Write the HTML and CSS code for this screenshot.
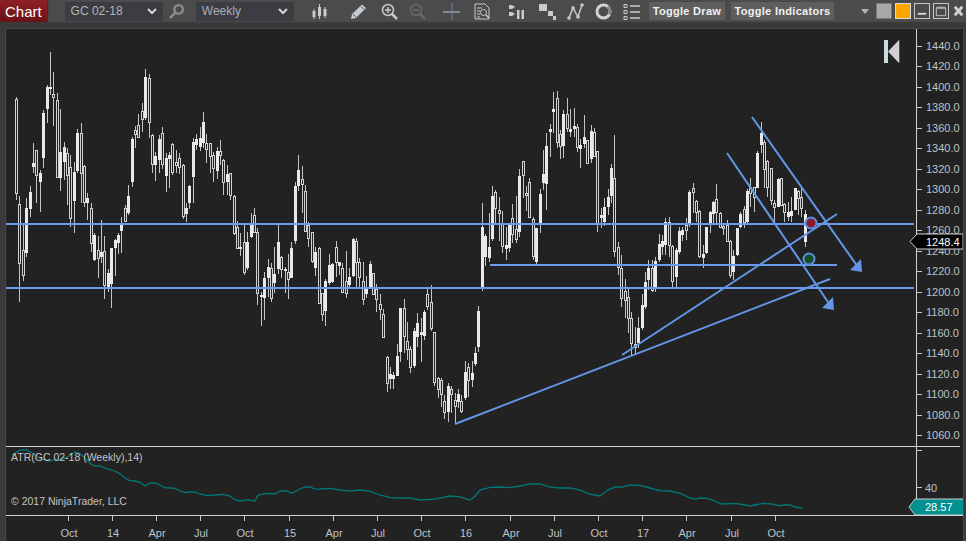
FILE: index.html
```html
<!DOCTYPE html>
<html lang="en">
<head>
<meta charset="utf-8">
<title>Chart</title>
<link rel="stylesheet" href="styles.css">
</head>
<body>
<div class="window">
  <header class="toolbar">
    <div class="tab">Chart</div>
    <div class="select select-instrument"><span>GC 02-18</span>
      <svg class="chev" viewBox="0 0 10 7"><path d="M1 1l4 4 4-4"/></svg></div>
    <svg class="icon icon-search" viewBox="0 0 16 16"><circle cx="10" cy="6" r="4"/><path d="M7 9l-5 5"/></svg>
    <div class="select select-period"><span>Weekly</span>
      <svg class="chev" viewBox="0 0 10 7"><path d="M1 1l4 4 4-4"/></svg></div>
    <svg class="icon icon-bars" viewBox="0 0 16 17"><path class="thin" d="M2.500 6v10M8 1v15M13.500 4v11"/><path d="M2.500 8v6M8 4v9M13.500 6v7"/></svg>
    <div class="tools">
      <svg class="icon tool w31" viewBox="0 0 17 17"><path class="fill" d="M1 16l1-5L12 1.500l4 3.500L6 15z"/><path class="cut" d="M3 11l3 3M11 3.500l3 3"/></svg>
      <svg class="icon tool w28" viewBox="0 0 17 17"><circle cx="7" cy="7" r="5.500"/><path d="M7 4v6M4 7h6"/><path class="heavy" d="M11 11l5 5"/></svg>
      <svg class="icon tool w34 dim" viewBox="0 0 17 17"><circle cx="7" cy="7" r="5.500"/><path d="M4 7h6"/><path class="heavy" d="M11 11l5 5"/></svg>
      <svg class="icon tool w31" viewBox="0 0 17 17"><path class="thin" d="M0 9h17"/><path class="blue" d="M9 0v18"/></svg>
      <svg class="icon tool w34" viewBox="0 0 17 17"><path class="thin" d="M1 1h10l4 4v11H1zM3 5h5M3 8h3M3 11h3M3 14h3"/><circle class="thin" cx="9.500" cy="9.500" r="3"/><path d="M12 12l3 3"/></svg>
      <svg class="icon tool w31" viewBox="0 0 17 17"><path class="fill" d="M1 2h3l3 2-3 2H1zM1 9h3l3 2-3 2H1zM9 7h2.500v9H9zM13.500 7H16v9h-2.500z"/></svg>
      <svg class="icon tool w28" viewBox="0 0 17 17"><path class="fill" d="M0 1h8v7H0zM9 8h5v5H9zM14 13h3v4h-3z"/></svg>
      <svg class="icon tool w28" viewBox="0 0 17 17"><path d="M2 15L6 5l5 9 4-12"/><circle class="fill" cx="2" cy="15" r="1.800"/><circle class="fill" cx="6" cy="5" r="1.800"/><circle class="fill" cx="11" cy="14" r="1.800"/><circle class="fill" cx="15" cy="2" r="1.800"/></svg>
      <svg class="icon tool w28" viewBox="0 0 17 17"><circle class="ring" cx="8.500" cy="8.500" r="6.500"/><path class="ring-light" d="M12.500 3.500a6.500 6.500 0 0 1 1.800 8"/></svg>
      <svg class="icon tool w25" viewBox="0 0 17 17"><path class="thin" d="M1 1.500h3v3H1zM1 7.500h3v3H1zM1 13.500h3v3H1z"/><path d="M7 3h10M7 9h10M7 15h10"/></svg>
    </div>
    <button class="toggle toggle-draw" type="button">Toggle Draw</button>
    <button class="toggle toggle-ind" type="button">Toggle Indicators</button>
    <span class="caret"></span>
    <div class="win win-gray"></div>
    <div class="win win-orange"></div>
    <div class="win win-line"><svg viewBox="0 0 15 15"><path class="win-glyph" d="M3 10.500h9"/></svg></div>
    <div class="win win-line"><svg viewBox="0 0 15 15"><path class="win-glyph-thin" d="M2.500 4.500h10v8h-10zM2.500 3.500h10"/></svg></div>
    <div class="win win-close"><svg viewBox="0 0 15 15"><path class="win-glyph-x" d="M3 3l8 9M11 3l-8 9"/></svg></div>
  </header>
  <main class="panel">
    <svg id="chart" class="chart" width="957" height="512" viewBox="6 29 957 512">
      <g id="candles"></g>
      <g class="levels">
        <path d="M6 224h908M6 288h908"/>
        <path d="M490 265h347"/>
      </g>
      <g class="trends">
        <path d="M752 117L858 267"/>
        <path d="M727 153L830 305"/>
        <path d="M622 355L837 214"/>
        <path d="M455 424L830 279"/>
      </g>
      <g class="arrowheads">
        <path d="M862 272l-12-2 11-11z"/>
        <path d="M834 310l-12-2 11-11z"/>
      </g>
      <circle class="dot dot-red" cx="811" cy="223" r="5.500"/>
      <circle class="dot dot-green" cx="809" cy="259" r="5.500"/>
      <path class="logo-bar" d="M884 40h4v23h-4z"/>
      <path class="logo-tri" d="M899 40v23l-11-11.500z"/>
      <path class="logo-red" d="M899.500 40v23"/>
      <g class="frame">
        <path d="M6 446h954M6 515h957M916 29v486"/>
      </g>
      <g id="priceAxis" class="axis-labels"></g>
      <g id="timeAxis" class="axis-labels"></g>
      <polyline id="atr" class="atr"/>
      <text class="note" x="11" y="461">ATR(GC 02-18 (Weekly),14)</text>
      <text class="note" x="11" y="505">© 2017 NinjaTrader, LLC</text>
      <path class="flag flag-price" d="M910 241.500l7-7.500h46v15h-46z"/>
      <text class="flag-text" x="926" y="246">1248.4</text>
      <path class="flag flag-atr" d="M909 507l6-8h49v16h-49z"/>
      <text class="flag-text" x="925" y="511">28.57</text>
    </svg>
  </main>
</div>
<script src="chart.js"></script>
</body>
</html>
```

FILE: styles.css
```css
* { box-sizing: border-box; }
html, body { margin: 0; padding: 0; }
body {
  width: 966px;
  height: 541px;
  overflow: hidden;
  background: #3a3a3a;
  font-family: "Liberation Sans", Arial, sans-serif;
}
.window { display: flex; flex-direction: column; height: 541px; }

.toolbar {
  display: flex;
  align-items: center;
  height: 22px;
  flex: none;
  background: #4b4b4b;
}
.tab {
  width: 47px;
  height: 22px;
  padding: 3px 0 0 5px;
  color: #fff;
  font-size: 15px;
  line-height: 17px;
  background: linear-gradient(#8e2027, #6a1217);
  box-shadow: 1px 1px 1px #333;
}
.select {
  display: flex;
  align-items: center;
  justify-content: space-between;
  width: 99px;
  height: 19px;
  padding: 0 6px;
  background: #3c3d43;
  color: #b4b4b4;
  font-size: 12px;
}
.select-instrument { margin-left: 18px; }
.select-period { margin-left: 11px; color: #a9aeb4; }
.chev { width: 10px; height: 7px; fill: none; stroke: #d5d5d5; stroke-width: 2; }

.icon {
  flex: none;
  width: 17px;
  height: 17px;
  fill: none;
  stroke: #c6cbcf;
  stroke-width: 1.500;
}
.icon .thin { stroke-width: 1; }
.icon .heavy { stroke-width: 2.500; }
.icon .fill { fill: #c6cbcf; stroke: none; }
.icon .cut { stroke: #4b4b4b; stroke-width: 1; }
.icon .blue { stroke: #5f86b8; stroke-width: 1; }
.icon .ring { stroke: #d0d4d8; stroke-width: 3; }
.icon .ring-light { stroke: #7f868c; stroke-width: 3; }
.icon.dim { stroke: #6c6f70; opacity: .9; }
.icon-search { margin-left: 5px; stroke: #8e8e8e; stroke-width: 2.200; }
.icon-bars { margin-left: 17px; stroke-width: 3; }

.tools { display: flex; margin-left: 22px; }
.w25 { margin-right: 8px; }
.w28 { margin-right: 11px; }
.w31 { margin-right: 14px; }
.w34 { margin-right: 17px; }

.toggle {
  flex: none;
  height: 18px;
  padding: 0;
  border: 0;
  background: #5e5e5e;
  color: #f1f1f1;
  font: bold 11px/18px "Liberation Sans", Arial, sans-serif;
  letter-spacing: .3px;
}
.toggle-draw { width: 76px; margin-left: 1px; }
.toggle-ind { width: 103px; margin-left: 6px; }
.caret {
  flex: none;
  width: 0;
  height: 0;
  margin-left: 27px;
  border-left: 4.500px solid transparent;
  border-right: 4.500px solid transparent;
  border-top: 5px solid #b4b4b4;
}
.win { flex: none; width: 16px; height: 16px; margin-left: 3px; }
.win svg { display: block; width: 100%; height: 100%; }
.win-gray { margin-left: 7px; background: #aaa9a9; border: 1px solid #7a7a7a; }
.win-orange { background: #ffa500; border: 1px solid #d8d8d8; }
.win-line { border: 1px solid #c8c8c8; }
.win-close { width: 14px; }
.win-glyph { fill: none; stroke: #d8d8d8; stroke-width: 2; }
.win-glyph-thin { fill: none; stroke: #c8c8c8; stroke-width: 1; }
.win-glyph-x { fill: none; stroke: #d0d0d0; stroke-width: 3; }

.panel {
  flex: 1;
  padding: 7px 3px 0 6px;
  background: #3a3a3a;
}
.chart { display: block; background: #222222; box-shadow: 0 0 0 1px #484848; }

.wick { stroke: #c4c4c4; stroke-width: 1; shape-rendering: crispEdges; }
.body-solid { fill: #e9e9e9; stroke: none; shape-rendering: crispEdges; }
.body-hollow { fill: #222222; stroke: #d2d2d2; stroke-width: 1; shape-rendering: crispEdges; }

.levels path { fill: none; stroke: #6a9bf0; stroke-width: 2; shape-rendering: crispEdges; }
.trends path { fill: none; stroke: #6496e8; stroke-width: 2; }
.arrowheads path { fill: #6496e8; stroke: none; }
.dot { stroke: #5e8fdc; stroke-width: 2; }
.dot-red { fill: #8a1c30; }
.dot-green { fill: #13501f; }
.logo-bar { fill: #c9dde0; }
.logo-tri { fill: #d2d2d2; }
.logo-red { stroke: #8d3a3a; stroke-width: 1; }

.frame path { fill: none; stroke: #d2d2d2; stroke-width: 1; shape-rendering: crispEdges; }
.tick { stroke: #c8c8c8; stroke-width: 1; shape-rendering: crispEdges; }
.axis-labels text {
  fill: #bcc2c8;
  font-size: 11px;
  font-family: "Liberation Sans", Arial, sans-serif;
}
.time-label { text-anchor: middle; }
.atr { fill: none; stroke: #007878; stroke-width: 1.300; }
.note {
  fill: #c4c4c4;
  font-size: 10.500px;
  font-family: "Liberation Sans", Arial, sans-serif;
}
.flag { stroke: #cfcfcf; stroke-width: 1; }
.flag-price { fill: #000; }
.flag-atr { fill: #009090; }
.flag-text {
  fill: #fff;
  font-size: 11px;
  font-family: "Liberation Sans", Arial, sans-serif;
}
```

FILE: chart.js
```js
// Each candle: high, body top, body bottom, low, kind (1 solid, 0 hollow), in chart pixels.
var CANDLES = "97,99,193,200,0;196,204,263,302,0;223,250,275,281,0;198,208,253,257,1;186,192,209,217,1;143,163,167,173,1;150,150,175,203,0;170,173,182,212,1;110,113,158,168,1;85,87,109,123,1;52,87,89,95,1;72,94,97,126,0;93,100,177,178,0;109,152,178,191,1;142,147,162,180,1;148,153,175,205,0;155,167,218,227,0;162,172,201,233,1;129,133,171,173,1;123,133,173,203,0;165,166,202,207,0;193,198,203,220,1;203,208,243,252,0;233,235,260,261,1;236,250,258,278,0;220,252,257,263,1;236,251,285,299,0;269,273,287,292,1;248,248,284,308,1;239,240,248,276,1;233,235,243,254,1;217,223,231,253,1;205,208,221,222,0;185,196,213,215,1;137,139,182,187,1;126,130,134,148,0;114,125,137,138,0;103,111,119,132,0;69,77,118,120,1;74,78,122,138,0;134,135,164,173,0;152,156,165,181,1;135,139,160,173,1;127,133,164,169,0;153,158,176,192,1;152,155,159,188,1;143,144,172,175,0;150,162,165,173,0;153,158,167,174,0;164,165,216,219,0;203,208,214,222,1;185,186,203,209,1;138,142,177,203,1;134,139,145,150,1;127,138,147,151,1;112,122,143,148,1;134,143,149,163,0;143,143,156,173,0;152,155,168,182,0;147,151,171,179,1;140,151,155,165,0;159,160,182,195,0;165,174,182,195,1;173,173,195,200,0;195,196,233,235,0;221,227,248,249,0;233,247,249,256,1;225,242,272,275,0;232,242,268,270,1;213,224,237,238,1;208,215,232,233,0;228,232,293,305,0;292,295,297,326,1;272,278,298,320,1;259,267,278,297,1;263,268,298,302,0;247,274,283,293,1;225,242,269,274,1;256,257,269,278,0;267,269,270,293,1;254,272,279,299,0;242,248,278,278,1;182,186,241,244,1;155,170,186,191,1;166,179,184,213,0;185,191,231,232,0;222,225,238,247,0;232,232,261,263,0;247,252,268,276,1;247,248,303,304,0;293,293,314,321,0;279,281,311,326,1;254,265,283,285,1;263,264,282,283,1;241,247,262,277,0;262,262,266,275,1;263,268,292,293,0;251,281,293,298,0;268,277,285,287,1;238,239,276,277,1;238,241,262,288,0;258,262,277,287,0;262,281,299,305,0;276,287,294,298,1;261,264,287,288,1;273,273,294,295,0;284,289,299,312,0;294,304,309,320,0;309,314,337,338,0;356,357,383,392,0;367,374,379,389,1;372,375,379,389,1;344,356,376,376,1;308,308,352,362,1;299,308,336,353,0;322,341,349,360,0;346,349,367,373,0;328,331,366,368,1;313,323,337,347,1;318,332,335,362,1;310,312,336,340,1;288,294,306,310,0;285,302,328,331,0;332,332,382,386,0;377,378,389,398,0;378,380,394,407,0;395,401,412,419,0;383,386,412,422,1;386,389,394,413,0;393,400,406,424,0;389,394,402,408,1;395,401,411,413,0;361,372,398,400,1;363,367,380,397,0;361,373,380,387,1;347,353,364,366,1;306,311,347,352,1;203,227,287,291,1;234,236,257,266,1;213,247,258,262,1;186,196,239,241,1;190,192,208,223,0;197,210,213,241,0;211,223,246,253,0;227,245,249,260,1;224,224,248,252,1;204,218,234,243,0;196,229,239,243,0;169,176,232,237,1;161,161,175,198,0;186,193,195,211,0;178,182,217,217,0;217,219,256,260,0;228,228,262,264,1;189,194,223,233,1;150,174,183,190,1;133,146,184,210,1;124,129,132,157,1;92,109,112,133,1;91,98,142,148,0;130,134,146,159,0;110,114,146,158,1;98,114,128,132,0;109,129,132,137,1;108,126,129,137,1;124,127,147,152,0;139,145,149,168,1;115,137,144,148,1;140,140,163,164,0;125,131,159,163,1;128,132,156,157,0;151,151,223,232,0;208,215,218,228,1;198,207,222,226,1;189,197,207,215,1;164,168,196,203,1;135,178,251,257,0;242,247,267,275,0;255,268,298,307,0;279,291,300,318,0;288,297,318,333,0;312,318,343,355,0;327,344,347,355,0;317,328,343,348,1;294,305,328,330,1;272,282,307,309,1;260,268,280,290,1;260,268,290,292,0;257,261,287,292,1;234,244,260,262,1;235,241,247,255,1;218,222,245,255,1;217,222,245,257,0;245,246,281,287,0;248,250,277,287,1;227,231,252,254,1;227,230,235,241,1;218,225,230,240,0;190,192,223,227,1;183,188,192,213,0;200,201,212,222,0;210,211,256,258,0;245,254,258,268,1;227,227,253,254,1;211,212,223,233,1;201,202,214,223,1;184,199,212,223,0;212,213,227,228,0;223,226,228,235,0;220,225,241,241,0;240,241,275,278,0;250,256,272,280,1;228,228,255,256,1;212,214,227,228,1;206,209,222,228,0;189,191,222,223,1;178,187,193,207,0;187,187,197,212,0;151,153,188,188,1;122,133,145,153,1;140,142,169,188,0;160,161,187,197,0;168,168,200,205,0;200,203,207,222,0;178,179,207,207,1;178,178,205,206,0;203,204,212,222,0;202,212,217,221,1;197,211,216,222,1;188,188,210,210,1;190,191,198,215,0;188,197,208,217,0;210,214,242,247,1";
var SVG_NS = "http://www.w3.org/2000/svg";

function el(parent, name, attrs, text) {
  var node = document.createElementNS(SVG_NS, name);
  for (var key in attrs) node.setAttribute(key, attrs[key]);
  if (text) node.textContent = text;
  parent.appendChild(node);
  return node;
}

var candles = document.getElementById("candles");
CANDLES.split(";").forEach(function (row, i) {
  var c = row.split(",").map(Number);
  var x = Math.round(16 + 3.4 * i);
  el(candles, "line", { "class": "wick", x1: x + 0.5, x2: x + 0.5, y1: c[0], y2: c[3] });
  if (c[4]) {
    el(candles, "rect", { "class": "body-solid", x: x - 1, y: c[1], width: 3, height: Math.max(c[2] - c[1], 2) });
  } else {
    el(candles, "rect", { "class": "body-hollow", x: x - 0.5, y: c[1] + 0.5, width: 2, height: Math.max(c[2] - c[1], 2) });
  }
});

var price = document.getElementById("priceAxis");
for (var p = 1440; p >= 1060; p -= 20) {
  var y = Math.round(46 + (1440 - p) * 1.0237);
  el(price, "line", { "class": "tick", x1: 916, x2: 922, y1: y + 0.5, y2: y + 0.5 });
  el(price, "text", { x: 926, y: y + 4 }, p.toFixed(1));
}
el(price, "line", { "class": "tick", x1: 916, x2: 922, y1: 450.5, y2: 450.5 });
el(price, "line", { "class": "tick", x1: 916, x2: 922, y1: 487.5, y2: 487.5 });
el(price, "text", { x: 925, y: 492 }, "40");

var times = ["Oct","14","Apr","Jul","Oct","15","Apr","Jul","Oct","16","Apr","Jul","Oct","17","Apr","Jul","Oct"];
var axis = document.getElementById("timeAxis");
times.forEach(function (label, i) {
  var x = Math.round(67.6 + 44.2 * i);
  el(axis, "line", { "class": "tick", x1: x + 0.5, x2: x + 0.5, y1: 515, y2: 521 });
  el(axis, "text", { "class": "time-label", x: x + 1, y: 537 }, label);
});

// ATR(14) trace: anchor points with a small ripple between them.
var atr = [
  [12,455],[20,450],[27,450],[35,455],[50,461],[60,460],[75,452],[85,458],[95,466],[105,468],
  [112,470],[125,478],[135,481],[145,486],[150,483],[160,485],[170,488],[180,491],[190,492],
  [200,494],[215,495],[230,496],[240,501],[255,501],[258,495],[275,494],[280,491],[292,493],
  [300,489],[310,487],[320,489],[340,490],[360,490],[380,495],[400,498],[420,500],[450,496],
  [470,500],[480,490],[500,487],[520,486],[540,484],[560,488],[580,490],[600,496],[615,487],
  [630,485],[650,488],[670,491],[690,498],[700,498],[715,501],[725,504],[745,505],[755,505],
  [772,504],[785,505],[795,507],[802,508]
];
var atrPoints = [];
atr.forEach(function (p, i) {
  var next = atr[i + 1];
  atrPoints.push(p.join(","));
  if (next && next[0] - p[0] > 8) {
    var mx = (p[0] + next[0]) / 2;
    var my = (p[1] + next[1]) / 2 + (i % 2 ? 1.2 : -1.2);
    atrPoints.push(mx + "," + my);
  }
});
document.getElementById("atr").setAttribute("points", atrPoints.join(" "));
```
